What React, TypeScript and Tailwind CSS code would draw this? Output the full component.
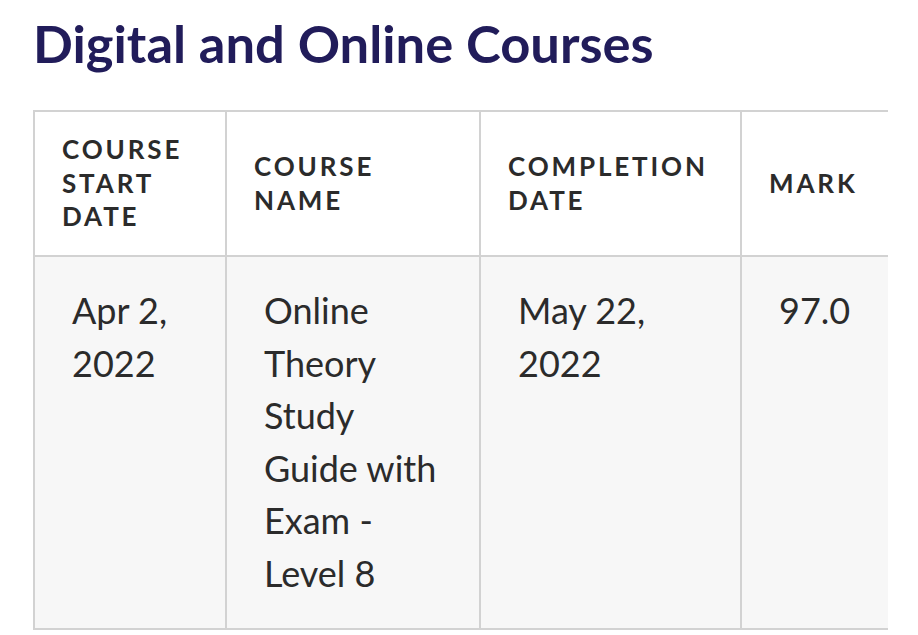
import React from "react";

export default function App() {
  const head = "px-[27px] align-middle text-left font-bold uppercase tracking-[0.11em] text-[26px] leading-[33.5px] text-[#2b2b2b] border-2 border-[#d2d2d2]";
  const body = "px-[37px] pt-[27px] pb-[29px] align-top text-left text-[36px] leading-[52.5px] text-[#2b2b2b] border-2 border-[#d2d2d2]";
  return (
    <div className="w-[918px] h-[635px] bg-white overflow-hidden" style={{ fontFamily: "Lato, 'Open Sans', sans-serif" }}>
      <h1 className="pl-[33px] pt-[12px] text-[52.5px] leading-[62px] font-bold text-[#211c5a]">
        Digital and Online Courses
      </h1>
      <div className="ml-[33px] mt-[36px] w-[855px] overflow-hidden">
        <table className="table-fixed border-collapse w-[1010px]">
          <colgroup>
            <col className="w-[192px]" />
            <col className="w-[254px]" />
            <col className="w-[261px]" />
            <col className="w-[303px]" />
          </colgroup>
          <thead>
            <tr className="bg-white h-[145px]">
              <th className={head}>Course<br />Start<br />Date</th>
              <th className={head}>Course<br />Name</th>
              <th className={head}>Completion<br />Date</th>
              <th className={head}>Mark</th>
            </tr>
          </thead>
          <tbody>
            <tr className="bg-[#f7f7f7]">
              <td className={body}>Apr 2,<br />2022</td>
              <td className={body}>Online<br />Theory<br />Study<br />Guide with<br />Exam -<br />Level 8</td>
              <td className={body}>May 22,<br />2022</td>
              <td className={body}>97.0</td>
            </tr>
          </tbody>
        </table>
      </div>
    </div>
  );
}
